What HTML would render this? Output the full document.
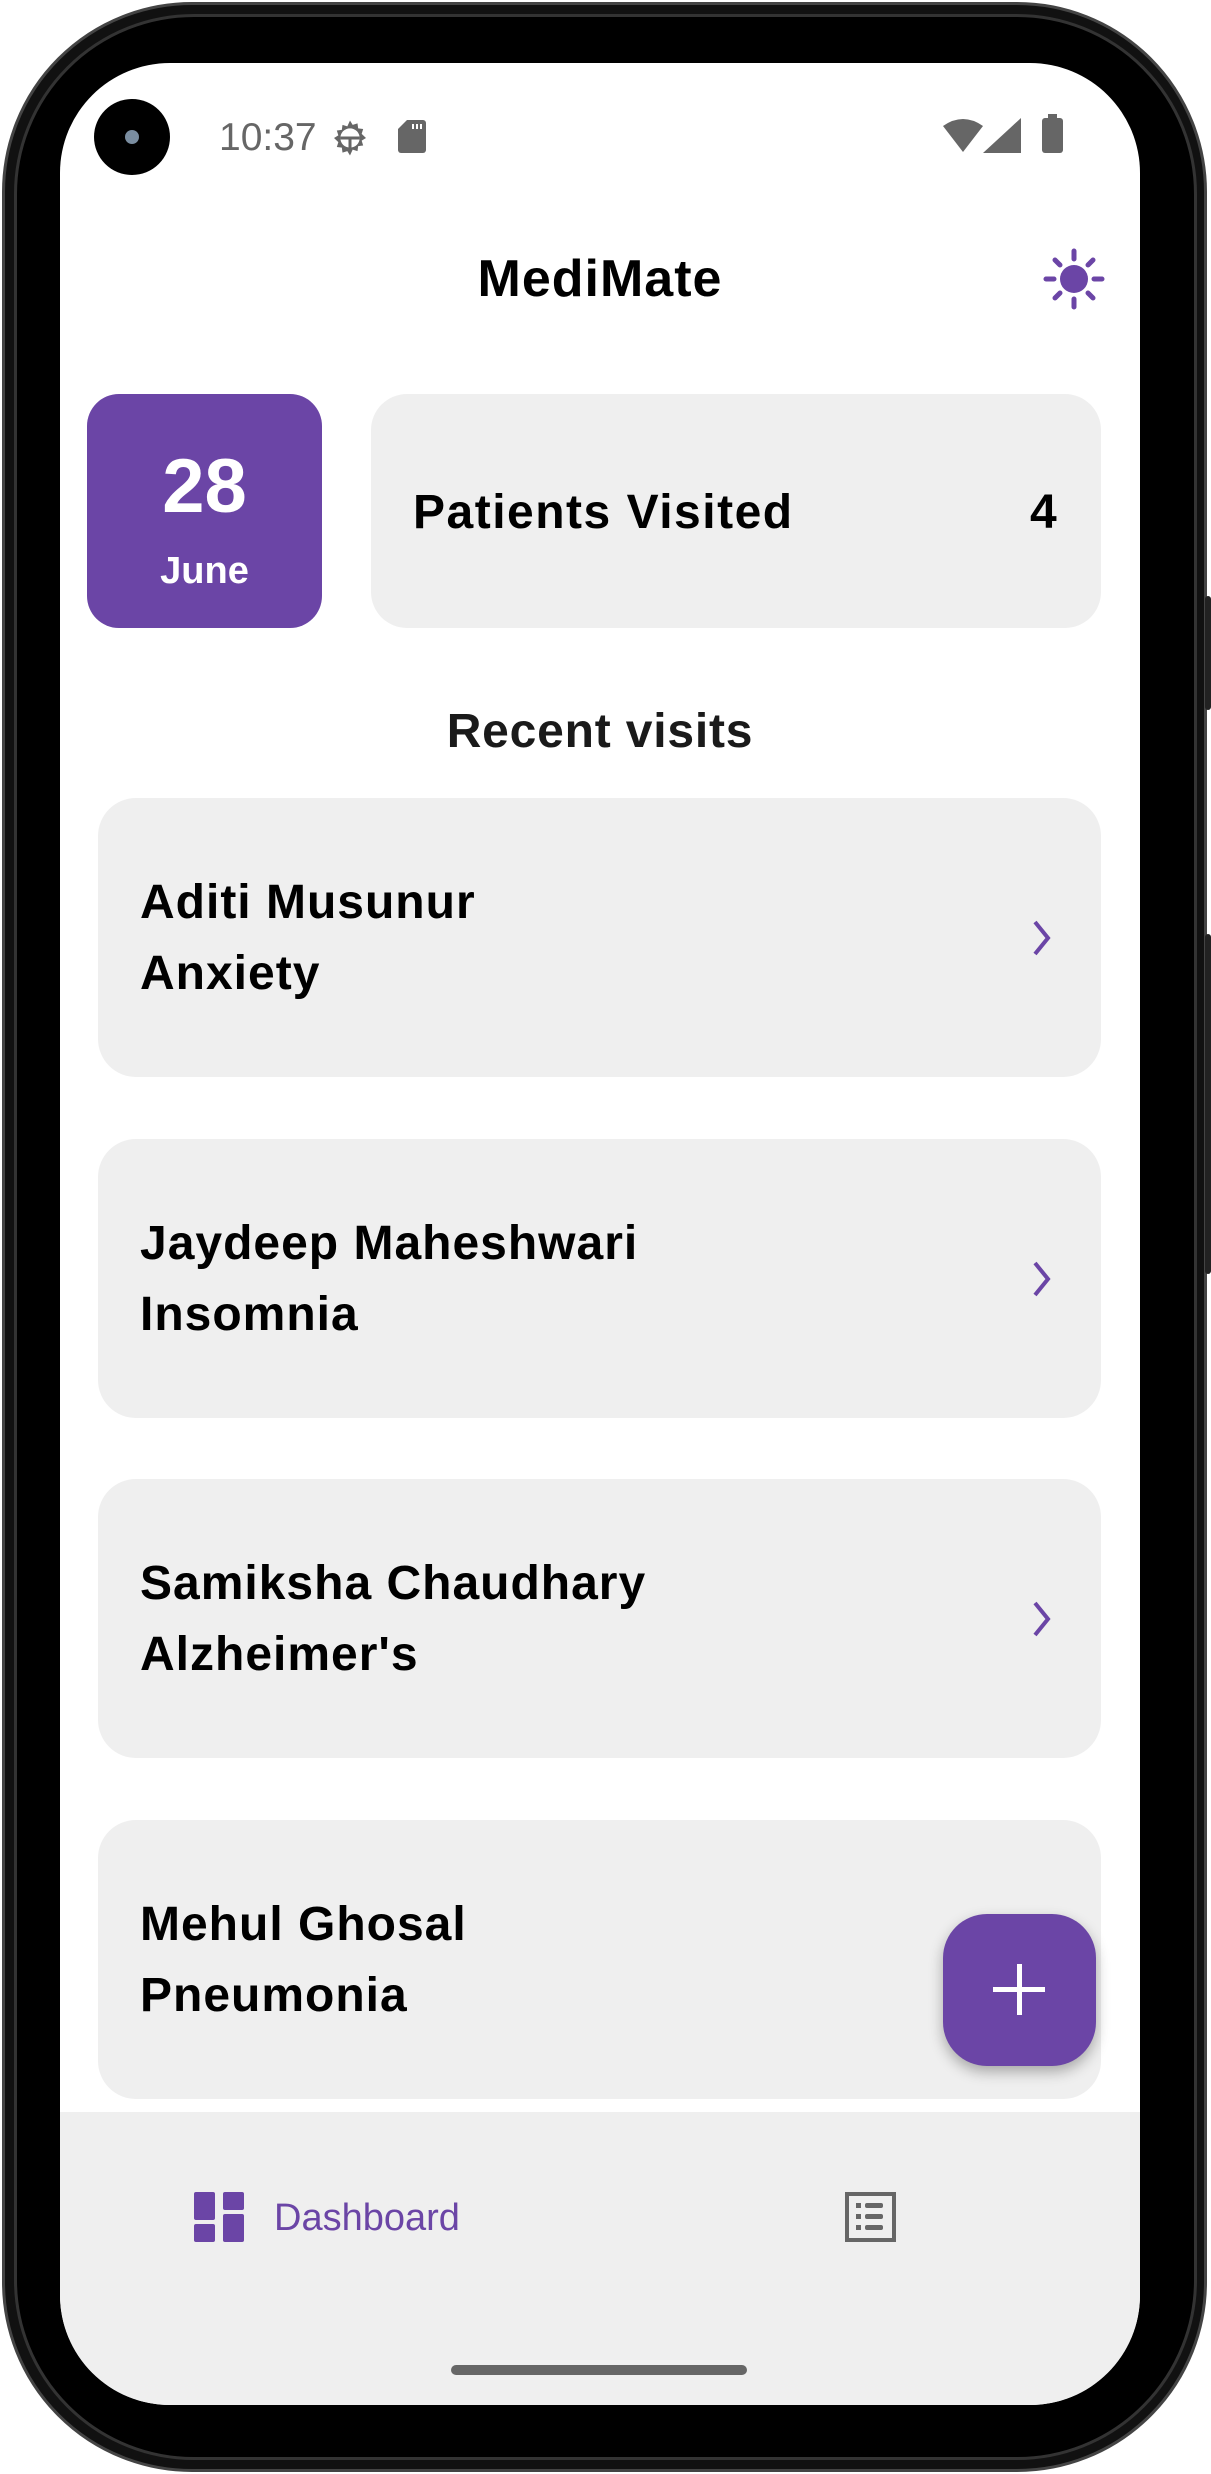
<!DOCTYPE html>
<html><head><meta charset="utf-8"><style>
*{margin:0;padding:0;box-sizing:border-box}
html,body{width:1211px;height:2474px;background:#fff;overflow:hidden;font-family:"Liberation Sans",sans-serif}
.phone{position:absolute;left:2px;top:2px;width:1205px;height:2470px;border-radius:190px;background:#111;border:3px solid #444}
.phone2{position:absolute;left:14px;top:14px;width:1183px;height:2446px;border-radius:180px;background:#000;border:3px solid #333}
.screen{position:absolute;left:60px;top:63px;width:1080px;height:2342px;border-radius:110px;background:#fff;overflow:hidden}
.btn{position:absolute;right:0;width:6px;background:#222;border-radius:3px}
.t{position:absolute;white-space:nowrap}
.card{position:absolute;left:38px;width:1003px;height:279px;background:#efefef;border-radius:38px}
.name{position:absolute;left:42px;font-weight:bold;font-size:48px;color:#000;letter-spacing:1px}
</style></head><body>
<div class="phone"></div><div class="phone2"></div>
<div class="btn" style="top:596px;height:114px"></div>
<div class="btn" style="top:934px;height:340px"></div>
<div class="screen">
 <div style="position:absolute;left:34px;top:36px;width:76px;height:76px;border-radius:50%;background:#000"></div>
 <div style="position:absolute;left:65px;top:67px;width:14px;height:14px;border-radius:50%;background:#7a8da0"></div>
 <div class="t" style="left:159px;top:53px;font-size:39px;color:#666">10:37</div>
 <svg style="position:absolute;left:268px;top:55px" width="44" height="40" viewBox="0 0 24 24"><path fill="#666" d="M12 1.5l1.6 2.6 2.9-.9.4 3 3 .4-.9 2.9L21.6 12l-2.6 1.6.9 2.9-3 .4-.4 3-2.9-.9L12 22.5l-1.6-2.6-2.9.9-.4-3-3-.4.9-2.9L2.4 12l2.6-1.6-.9-2.9 3-.4.4-3 2.9.9z"/><circle cx="12" cy="12" r="5.8" fill="#fff"/><path d="M6.2 12h11.6M12 12v6" stroke="#666" stroke-width="1.8"/></svg>
 <svg style="position:absolute;left:338px;top:57px" width="28" height="33" viewBox="0 0 28 33"><path fill="#666" d="M9 0h16a3 3 0 0 1 3 3v27a3 3 0 0 1-3 3H3a3 3 0 0 1-3-3V9z"/><rect x="14" y="4" width="2" height="5" fill="#fff"/><rect x="18" y="4" width="2" height="5" fill="#fff"/><rect x="22" y="4" width="2" height="5" fill="#fff"/></svg>
 <svg style="position:absolute;left:883px;top:55px" width="40" height="34" viewBox="0 0 40 34"><path fill="#666" d="M0 8Q20-6 40 8L20 34z"/></svg>
 <svg style="position:absolute;left:923px;top:55px" width="38" height="35"><path fill="#666" d="M38 0V35H0z"/></svg>
 <div style="position:absolute;left:982px;top:55px;width:21px;height:35px;background:#666;border-radius:3px"></div>
 <div style="position:absolute;left:988px;top:51px;width:9px;height:5px;background:#666"></div>
 <div class="t" style="left:0;width:1080px;text-align:center;top:186px;font-size:52px;font-weight:bold;color:#000;letter-spacing:1px">MediMate</div>
 <svg style="position:absolute;left:982px;top:184px" width="64" height="64" viewBox="-32 -32 64 64"><circle r="14" fill="#6b45a6"/><g stroke="#6b45a6" stroke-width="5" stroke-linecap="round"><path d="M0-20v-8M0 20v8M-20 0h-8M20 0h8M14 -14l5-5M-14 14l-5 5M14 14l5 5M-14 -14l-5-5"/></g></svg>
 <div style="position:absolute;left:27px;top:331px;width:235px;height:234px;background:#6b45a6;border-radius:32px"></div>
 <div class="t" style="left:27px;width:235px;text-align:center;top:380px;font-size:76px;font-weight:bold;color:#fff">28</div>
 <div class="t" style="left:27px;width:235px;text-align:center;top:487px;font-size:38px;font-weight:bold;color:#fff">June</div>
 <div style="position:absolute;left:311px;top:331px;width:730px;height:234px;background:#efefef;border-radius:36px"></div>
 <div class="t" style="left:353px;top:422px;font-size:48px;font-weight:bold;color:#000;letter-spacing:1.5px">Patients Visited</div>
 <div class="t" style="left:970px;top:422px;font-size:48px;font-weight:bold;color:#000">4</div>
 <div class="t" style="left:0;width:1080px;text-align:center;top:641px;font-size:48px;font-weight:bold;color:#1a1a1a;letter-spacing:0.8px">Recent visits</div>
 <div class="card" style="top:735px"><div class="name" style="top:77px">Aditi Musunur</div><div class="name" style="top:148px">Anxiety</div><svg style="position:absolute;left:932px;top:122px" width="24" height="36"><path d="M5 2l13 16-13 16" fill="none" stroke="#6b45a6" stroke-width="4"/></svg></div>
 <div class="card" style="top:1076px"><div class="name" style="top:77px">Jaydeep Maheshwari</div><div class="name" style="top:148px">Insomnia</div><svg style="position:absolute;left:932px;top:122px" width="24" height="36"><path d="M5 2l13 16-13 16" fill="none" stroke="#6b45a6" stroke-width="4"/></svg></div>
 <div class="card" style="top:1416px"><div class="name" style="top:77px">Samiksha Chaudhary</div><div class="name" style="top:148px">Alzheimer's</div><svg style="position:absolute;left:932px;top:122px" width="24" height="36"><path d="M5 2l13 16-13 16" fill="none" stroke="#6b45a6" stroke-width="4"/></svg></div>
 <div class="card" style="top:1757px"><div class="name" style="top:77px">Mehul Ghosal</div><div class="name" style="top:148px">Pneumonia</div></div>
 <div style="position:absolute;left:883px;top:1851px;width:153px;height:152px;background:#6b45a6;border-radius:44px;box-shadow:0 6px 14px rgba(0,0,0,.3)"></div>
 <div style="position:absolute;left:933px;top:1924px;width:52px;height:5px;background:#fff"></div>
 <div style="position:absolute;left:957px;top:1901px;width:5px;height:51px;background:#fff"></div>
 <div style="position:absolute;left:0;top:2049px;width:1080px;height:300px;background:#efefef"></div>
 <svg style="position:absolute;left:134px;top:2129px" width="50" height="50" viewBox="0 0 50 50"><g fill="#6b45a6"><rect x="0" y="0" width="21" height="28" rx="2"/><rect x="0" y="32" width="21" height="18" rx="2"/><rect x="29" y="0" width="21" height="18" rx="2"/><rect x="29" y="22" width="21" height="28" rx="2"/></g></svg>
 <div class="t" style="left:214px;top:2134px;font-size:38px;color:#6b45a6">Dashboard</div>
 <svg style="position:absolute;left:785px;top:2129px" width="51" height="50" viewBox="0 0 51 50"><rect x="2" y="2" width="47" height="46" fill="none" stroke="#666" stroke-width="4"/><g fill="#666"><rect x="11" y="11" width="5" height="5"/><rect x="20" y="11" width="18" height="5" rx="2"/><rect x="11" y="22" width="5" height="5"/><rect x="20" y="22" width="18" height="5" rx="2"/><rect x="11" y="33" width="5" height="5"/><rect x="20" y="33" width="18" height="5" rx="2"/></g></svg>
 <div style="position:absolute;left:391px;top:2302px;width:296px;height:10px;border-radius:5px;background:#666"></div>
</div>
</body></html>
